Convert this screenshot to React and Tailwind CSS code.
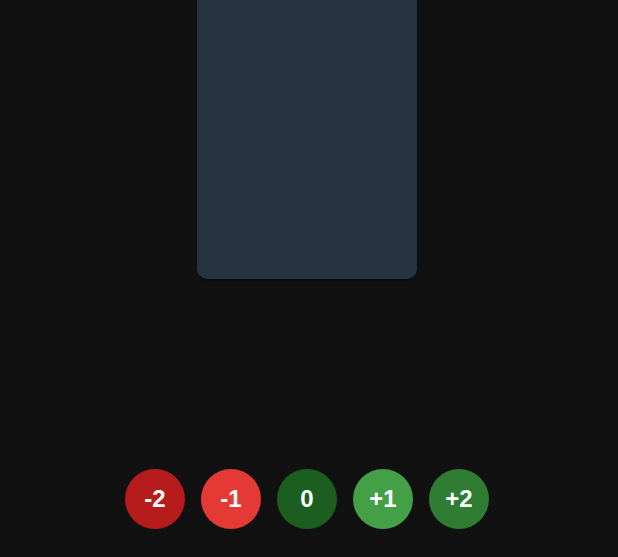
const votes = [
  { label: "-2", color: "bg-[#b71c1c]" },
  { label: "-1", color: "bg-[#e53935]" },
  { label: "0", color: "bg-[#1b5e20]" },
  { label: "+1", color: "bg-[#43a047]" },
  { label: "+2", color: "bg-[#2e7d32]" },
];

export default function App() {
  return (
    <div
      className="h-[557px] w-full bg-[#111111] flex flex-col items-center pr-1 overflow-hidden"
      style={{ fontFamily: '"Liberation Sans", Arial, sans-serif' }}
    >
      <div className="w-[220px] h-[279px] bg-[#263442] rounded-b-[10px] shadow-[0_1px_2px_rgba(0,0,0,0.5)]" />
      <div className="flex-1" />
      <div className="flex gap-4 pb-7">
        {votes.map((v) => (
          <button
            key={v.label}
            className={`w-[60px] h-[60px] rounded-full ${v.color} text-white text-2xl font-bold flex items-center justify-center`}
          >
            {v.label}
          </button>
        ))}
      </div>
    </div>
  );
}
